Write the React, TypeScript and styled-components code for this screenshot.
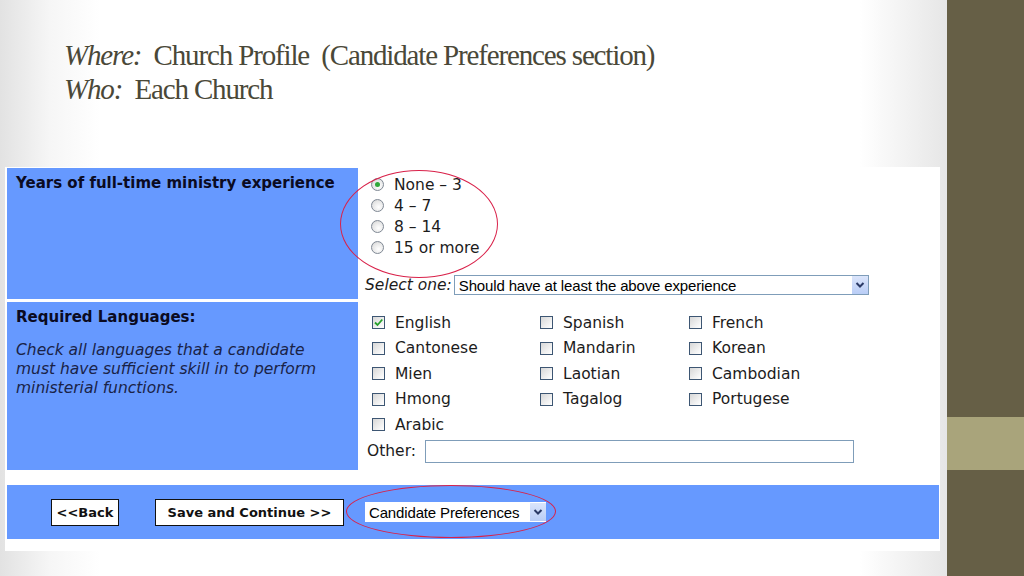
import React from "react";
import styled, { createGlobalStyle } from "styled-components";

const GlobalStyle = createGlobalStyle`
  html, body { margin: 0; padding: 0; }
  body { width: 1024px; height: 576px; overflow: hidden; background: #fff; }
`;

const Page = styled.div`
  display: flex;
  width: 1024px;
  height: 576px;
`;

const Slide = styled.div`
  position: relative;
  flex: 1;
  display: flex;
  flex-direction: column;
  background: linear-gradient(90deg, #e2e2e2 0px, #f6f6f6 50px, #fff 100px, #fff 860px, #f1f1f1 910px, #e6e6e6 947px);
`;

const Sidebar = styled.div`
  width: 77px;
  display: flex;
  flex-direction: column;
  background: #665f46;
`;

const SideBand = styled.div<{ $top: number; $h: number; $c: string }>`
  margin-top: ${(p) => p.$top}px;
  height: ${(p) => p.$h}px;
  background: ${(p) => p.$c};
`;

const Title = styled.div`
  box-sizing: border-box;
  height: 167px;
  padding: 38px 0 0 64px;
  font-family: "Liberation Serif", "DejaVu Serif", serif;
  font-size: 29px;
  letter-spacing: -1.15px;
  color: #4a4838;
`;

const TitleLine = styled.div`
  line-height: 34px;
  white-space: pre;
`;

const Em = styled.span`
  font-style: italic;
`;

const Shot = styled.div`
  position: relative;
  margin-left: 5px;
  width: 935px;
  height: 384px;
  box-sizing: border-box;
  padding: 1px 1px 0 2px;
  background: #fff;
  font-family: "DejaVu Sans", Verdana, sans-serif;
`;

const FormGrid = styled.div`
  display: grid;
  grid-template-columns: 351px 1fr;
  grid-template-rows: 131px 168px;
  row-gap: 3px;
`;

const LabelCell = styled.div`
  background: #6699ff;
  padding: 5px 0 0 9px;
  color: #0b0b22;
`;

const LabelHead = styled.div`
  font-weight: bold;
  font-size: 15px;
  line-height: 20px;
`;

const LabelNote = styled.div`
  margin-top: 14px;
  font-style: italic;
  font-size: 15.5px;
  line-height: 19px;
  color: #1a2347;
  width: 318px;
`;

const FieldCell = styled.div<{ $pt: number }>`
  padding: ${(p) => p.$pt}px 0 0 7px;
  color: #1c1c1c;
  font-size: 15.5px;
`;

const RadioList = styled.div`
  display: flex;
  flex-direction: column;
  padding-left: 6px;
`;

const OptionRow = styled.label`
  display: flex;
  align-items: center;
  height: 21px;
  gap: 10px;
`;

const Radio = styled.span<{ $checked?: boolean }>`
  box-sizing: border-box;
  width: 13px;
  height: 13px;
  border-radius: 50%;
  border: 1px solid #7f8894;
  background: radial-gradient(circle at 60% 65%, #fff 0%, #e6e6e6 60%, #c9c9c9 100%);
  display: flex;
  align-items: center;
  justify-content: center;
  &::after {
    content: "";
    display: ${(p) => (p.$checked ? "block" : "none")};
    width: 5px;
    height: 5px;
    border-radius: 50%;
    background: #2fa83a;
  }
`;

const SelectRow = styled.div`
  display: flex;
  align-items: center;
  margin-top: 17px;
  height: 20px;
  gap: 2px;
`;

const Hint = styled.span`
  font-style: italic;
`;

const SelectBox = styled.div<{ $w: number }>`
  box-sizing: border-box;
  width: ${(p) => p.$w}px;
  height: 20px;
  border: 1px solid #7f9db9;
  background: #fff;
  display: flex;
  align-items: center;
  justify-content: space-between;
  padding-left: 4px;
  font-family: "Liberation Sans", Arial, sans-serif;
  font-size: 15px;
  letter-spacing: -0.15px;
  color: #000;
`;

const BarSelect = styled(SelectBox)`
  margin-left: 21px;
  border: none;
`;

const ArrowBtn = styled.span`
  width: 16px;
  height: 18px;
  background: linear-gradient(180deg, #dbe5fb 0%, #b9cdf6 100%);
  border-left: 1px solid #fff;
  display: flex;
  align-items: center;
  justify-content: center;
`;

const CheckGrid = styled.div`
  display: grid;
  grid-template-columns: 168px 149px 1fr;
  grid-auto-rows: 25.5px;
  padding-left: 7px;
`;

const Box = styled.span`
  box-sizing: border-box;
  width: 13px;
  height: 13px;
  border: 1px solid #3d5673;
  background: linear-gradient(135deg, #d7d7d7 0%, #f4f4f4 70%, #fff 100%);
  display: flex;
  align-items: center;
  justify-content: center;
`;

const CheckRow = styled.label`
  display: flex;
  align-items: center;
  gap: 10px;
`;

const OtherRow = styled.div`
  display: flex;
  align-items: center;
  gap: 9px;
  margin-top: 2px;
  height: 23px;
  padding-left: 2px;
`;

const TextInput = styled.div`
  box-sizing: border-box;
  width: 429px;
  height: 23px;
  border: 1px solid #7f9db9;
  background: #fff;
`;

const ButtonBar = styled.div`
  margin-top: 15px;
  height: 54px;
  background: #6699ff;
  display: flex;
  align-items: center;
  padding-left: 44px;
`;

const Button = styled.div<{ $w: number; $ml: number }>`
  box-sizing: border-box;
  width: ${(p) => p.$w}px;
  height: 27px;
  margin-left: ${(p) => p.$ml}px;
  border: 1.5px solid #111;
  background: #fff;
  display: flex;
  align-items: center;
  justify-content: center;
  font-weight: bold;
  font-size: 13px;
  color: #111;
`;

const Ellipse = styled.div<{ $x: number; $y: number; $w: number; $h: number }>`
  position: absolute;
  left: ${(p) => p.$x}px;
  top: ${(p) => p.$y}px;
  width: ${(p) => p.$w}px;
  height: ${(p) => p.$h}px;
  border: 1.3px solid #d9224a;
  border-radius: 50%;
  pointer-events: none;
`;

const Chevron = () => (
  <svg width="10" height="8" viewBox="0 0 10 8">
    <path d="M1.5 2 L5 5.5 L8.5 2" fill="none" stroke="#2b3a66" strokeWidth="2" />
  </svg>
);

const Check = () => (
  <svg width="11" height="11" viewBox="0 0 11 11">
    <path d="M2 5.5 L4.5 8 L9.3 2.5" fill="none" stroke="#25a02a" strokeWidth="1.8" />
  </svg>
);

const radios = ["None \u2013 3", "4 \u2013 7", "8 \u2013 14", "15 or more"];
const langs = [
  "English", "Spanish", "French",
  "Cantonese", "Mandarin", "Korean",
  "Mien", "Laotian", "Cambodian",
  "Hmong", "Tagalog", "Portugese",
  "Arabic",
];

export default function App() {
  return (
    <>
      <GlobalStyle />
      <Page>
        <Slide>
          <Title>
            <TitleLine>
              <Em>Where:</Em>  Church Profile  (Candidate Preferences section)
            </TitleLine>
            <TitleLine>
              <Em>Who:</Em>  Each Church
            </TitleLine>
          </Title>
          <Shot>
            <FormGrid>
              <LabelCell>
                <LabelHead>Years of full-time ministry experience</LabelHead>
              </LabelCell>
              <FieldCell $pt={6}>
                <RadioList>
                  {radios.map((r, i) => (
                    <OptionRow key={r}>
                      <Radio $checked={i === 0} />
                      {r}
                    </OptionRow>
                  ))}
                </RadioList>
                <SelectRow>
                  <Hint>Select one:</Hint>
                  <SelectBox $w={415}>
                    Should have at least the above experience
                    <ArrowBtn>
                      <Chevron />
                    </ArrowBtn>
                  </SelectBox>
                </SelectRow>
              </FieldCell>
              <LabelCell>
                <LabelHead>Required Languages:</LabelHead>
                <LabelNote>
                  Check all languages that a candidate must have sufficient skill in to perform ministerial functions.
                </LabelNote>
              </LabelCell>
              <FieldCell $pt={8}>
                <CheckGrid>
                  {langs.map((l) => (
                    <CheckRow key={l}>
                      <Box>{l === "English" && <Check />}</Box>
                      {l}
                    </CheckRow>
                  ))}
                </CheckGrid>
                <OtherRow>
                  Other:
                  <TextInput />
                </OtherRow>
              </FieldCell>
            </FormGrid>
            <ButtonBar>
              <Button $w={68} $ml={0}>&lt;&lt;Back</Button>
              <Button $w={189} $ml={36}>Save and Continue &gt;&gt;</Button>
              <BarSelect $w={181}>
                Candidate Preferences
                <ArrowBtn>
                  <Chevron />
                </ArrowBtn>
              </BarSelect>
            </ButtonBar>
            <Ellipse $x={335} $y={3} $w={156} $h={106} />
            <Ellipse $x={341} $y={318} $w={208} $h={51} />
          </Shot>
        </Slide>
        <Sidebar>
          <SideBand $top={417} $h={53} $c="#a9a47b" />
        </Sidebar>
      </Page>
    </>
  );
}
